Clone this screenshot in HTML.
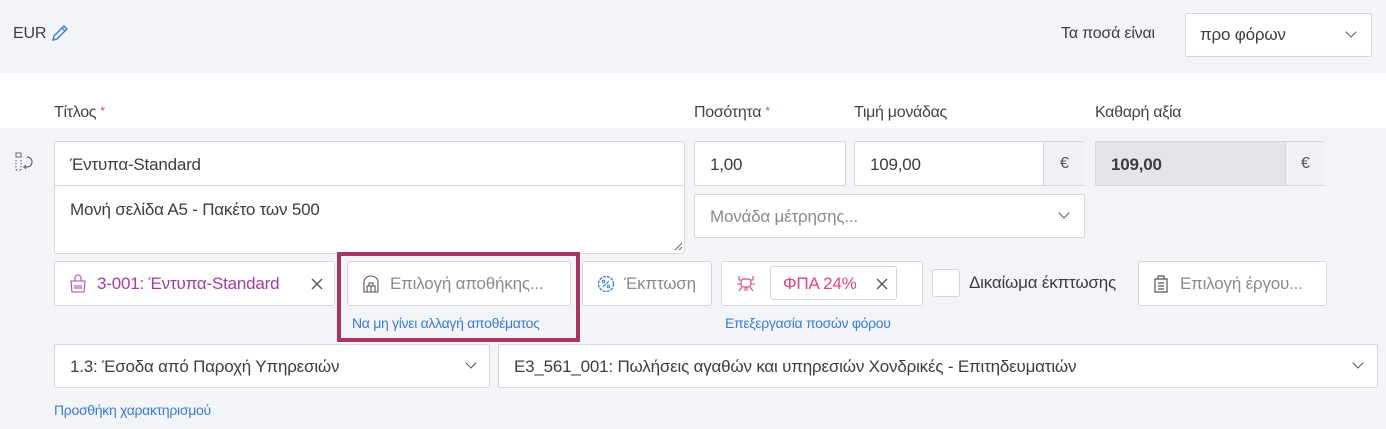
<!DOCTYPE html>
<html><head><meta charset="utf-8"><style>
*{box-sizing:border-box;margin:0;padding:0}
body{width:1386px;height:429px;overflow:hidden;background:#f3f4f8;font-family:"Liberation Sans","Noto Sans CJK SC",sans-serif;color:#3d3d3d;position:relative;font-size:16px}
.a{position:absolute}
.box{position:absolute;background:#fff;border:1px solid #d5d7dc;border-radius:3px}
.lbl{position:absolute;top:104px;font-size:16px;color:#444;letter-spacing:-0.3px}
.req{color:#e0457b;font-size:12px;vertical-align:top}
.t{position:absolute;white-space:nowrap;letter-spacing:-0.2px}
.ph{color:#8a8a8a}
.link{color:#3a7bd5;font-size:14px;letter-spacing:-0.3px}
.chev{position:absolute;width:8px;height:8px;border-right:1.5px solid #555;border-bottom:1.5px solid #555;transform:rotate(45deg)}
</style></head><body>
<div class="a" style="left:0;top:73px;width:1386px;height:55px;background:#fff"></div>
<div class="t" style="left:13px;top:25px;font-size:16px">EUR</div>
<svg class="a" style="left:50px;top:23px" width="20" height="20" viewBox="0 0 20 20"><path d="M3 17l1-4L14 3l3 3L7 16z M12 5l3 3" fill="none" stroke="#3a7bd5" stroke-width="1.4"/></svg>
<div class="t" style="left:1061px;top:25px;font-size:16px">Τα ποσά είναι</div>
<div class="box" style="left:1185px;top:13px;width:187px;height:44px;border-radius:2px"><div class="t" style="left:14px;top:11px;font-size:17px">προ φόρων</div><div class="chev" style="left:161px;top:14px"></div></div>

<div class="lbl" style="left:54px">Τίτλος <span class="req">*</span></div>
<div class="lbl" style="left:694px">Ποσότητα <span class="req">*</span></div>
<div class="lbl" style="left:854px">Τιμή μονάδας</div>
<div class="lbl" style="left:1095px">Καθαρή αξία</div>

<svg class="a" style="left:14px;top:151px" width="24" height="22" viewBox="0 0 24 22"><rect x="2" y="2" width="5" height="4" fill="none" stroke="#667" stroke-width="1"/><path d="M2 9v10M7 9v10M2 19h5" stroke="#667" stroke-dasharray="1.5 1.5" fill="none"/><path d="M13 6a5 5 0 1 1 0 10h-3l2-2M10 16l2 2" fill="none" stroke="#667" stroke-width="1.2"/></svg>
<div class="box" style="left:54px;top:141px;width:631px;height:113px"></div>
<div class="a" style="left:55px;top:185px;width:629px;height:1px;background:#d5d7dc"></div>
<div class="t" style="left:70px;top:155px;font-size:17px">Έντυπα-Standard</div>
<div class="t" style="left:70px;top:200px;font-size:17px">Μονή σελίδα Α5 - Πακέτο των 500</div>
<svg class="a" style="left:674px;top:242px" width="9" height="9"><path d="M1 8L8 1M5 8L8 5" stroke="#666"/></svg>

<div class="box" style="left:694px;top:141px;width:152px;height:45px;border-radius:2px"><div class="t" style="left:15px;top:13px;font-size:17px">1,00</div></div>
<div class="box" style="left:854px;top:141px;width:231px;height:45px;border-radius:2px"><div class="t" style="left:15px;top:13px;font-size:17px">109,00</div><div class="a" style="left:188px;top:0;width:42px;height:43px;background:#f0f1f4;border-left:1px solid #d5d7dc;text-align:center;line-height:43px;color:#555">€</div></div>
<div class="box" style="left:1095px;top:141px;width:230px;height:45px;border-radius:2px;background:#e4e5e9"><div class="t" style="left:15px;top:13px;font-size:17px;font-weight:bold">109,00</div><div class="a" style="left:189px;top:0;width:40px;height:43px;background:#f0f1f4;border-left:1px solid #d5d7dc;text-align:center;line-height:43px;color:#555">€</div></div>
<div class="box" style="left:694px;top:194px;width:391px;height:44px;border-radius:2px"><div class="t ph" style="left:15px;top:12px;font-size:17px">Μονάδα μέτρησης...</div><div class="chev" style="left:365px;top:14px"></div></div>

<div class="box" style="left:54px;top:261px;width:281px;height:45px"><svg class="a" style="left:14px;top:12px" width="18" height="20" viewBox="0 0 18 20"><path d="M2 7h14l-1 11H3z M6 7V4a3 3 0 0 1 6 0v3 M6 11v4M8 11v4M10 11v4M12 11v4" fill="none" stroke="#b04ab0" stroke-width="1.1"/></svg><div class="t" style="left:42px;top:12px;font-size:17px;color:#a53aa8">3-001: Έντυπα-Standard</div><svg class="a" style="left:256px;top:16px" width="12" height="12"><path d="M1 1l10 10M11 1L1 11" stroke="#555" stroke-width="1.4"/></svg></div>

<div class="a" style="left:337px;top:252px;width:243px;height:90px;border:4px solid #a83561;background:#f3f4f8"></div>
<div class="box" style="left:347px;top:261px;width:224px;height:45px"><svg class="a" style="left:14px;top:13px" width="18" height="18" viewBox="0 0 18 18"><path d="M2 17V7a7 6 0 0 1 14 0v10z M5 17v-6h8v6 M7 11V8h4v3 M9 11v6" fill="none" stroke="#555" stroke-width="1.1"/></svg><div class="t ph" style="left:42px;top:12px;font-size:17px">Επιλογή αποθήκης...</div></div>
<div class="t link" style="left:352px;top:315px">Να μη γίνει αλλαγή αποθέματος</div>

<div class="box" style="left:582px;top:261px;width:130px;height:45px"><svg class="a" style="left:13px;top:12px" width="20" height="20" viewBox="0 0 20 20"><circle cx="10" cy="10" r="7.5" fill="none" stroke="#3a7bd5" stroke-width="1.3" stroke-dasharray="3 1"/><path d="M7 13l6-6" stroke="#3a7bd5"/><circle cx="7.5" cy="7.5" r="1.2" fill="none" stroke="#3a7bd5"/><circle cx="12.5" cy="12.5" r="1.2" fill="none" stroke="#3a7bd5"/></svg><div class="t ph" style="left:41px;top:12px;font-size:17px">Έκπτωση</div></div>

<div class="box" style="left:721px;top:261px;width:202px;height:45px"><svg class="a" style="left:14px;top:13px" width="20" height="18" viewBox="0 0 20 18"><rect x="5" y="4" width="10" height="8" rx="3" fill="none" stroke="#e0457b" stroke-width="1.2"/><path d="M3 1v4h3M17 1v4h-3M5 9H1M15 9h4M6 12l-3 4M14 12l3 4M9 12v4M11 12v4" fill="none" stroke="#e0457b" stroke-width="1.1"/></svg><div class="a" style="left:48px;top:4px;width:127px;height:34px;border:1px solid #d5d7dc;border-radius:3px"><div class="t" style="left:12px;top:7px;font-size:17px;color:#e0457b">ΦΠΑ 24%</div><svg class="a" style="left:105px;top:11px" width="12" height="12"><path d="M1 1l10 10M11 1L1 11" stroke="#555" stroke-width="1.4"/></svg></div></div>
<div class="t link" style="left:725px;top:315px">Επεξεργασία ποσών φόρου</div>

<div class="box" style="left:932px;top:269px;width:28px;height:28px"></div>
<div class="t" style="left:969px;top:273px;font-size:17px">Δικαίωμα έκπτωσης</div>
<div class="box" style="left:1138px;top:261px;width:189px;height:45px"><svg class="a" style="left:14px;top:13px" width="16" height="18" viewBox="0 0 16 18"><path d="M2 4h12v13H2z M5 4V1h6v3 M5 8h6M5 11h6M5 14h6" fill="none" stroke="#555" stroke-width="1.2"/></svg><div class="t ph" style="left:41px;top:12px;font-size:17px">Επιλογή έργου...</div></div>

<div class="box" style="left:54px;top:344px;width:436px;height:44px;border-radius:2px"><div class="t" style="left:15px;top:12px;font-size:17px">1.3: Έσοδα από Παροχή Υπηρεσιών</div><div class="chev" style="left:412px;top:14px"></div></div>
<div class="box" style="left:498px;top:344px;width:880px;height:44px;border-radius:2px"><div class="t" style="left:15px;top:12px;font-size:17px">Ε3_561_001: Πωλήσεις αγαθών και υπηρεσιών Χονδρικές - Επιτηδευματιών</div><div class="chev" style="left:855px;top:14px"></div></div>
<div class="t link" style="left:54px;top:402px">Προσθήκη χαρακτηρισμού</div>
</body></html>
